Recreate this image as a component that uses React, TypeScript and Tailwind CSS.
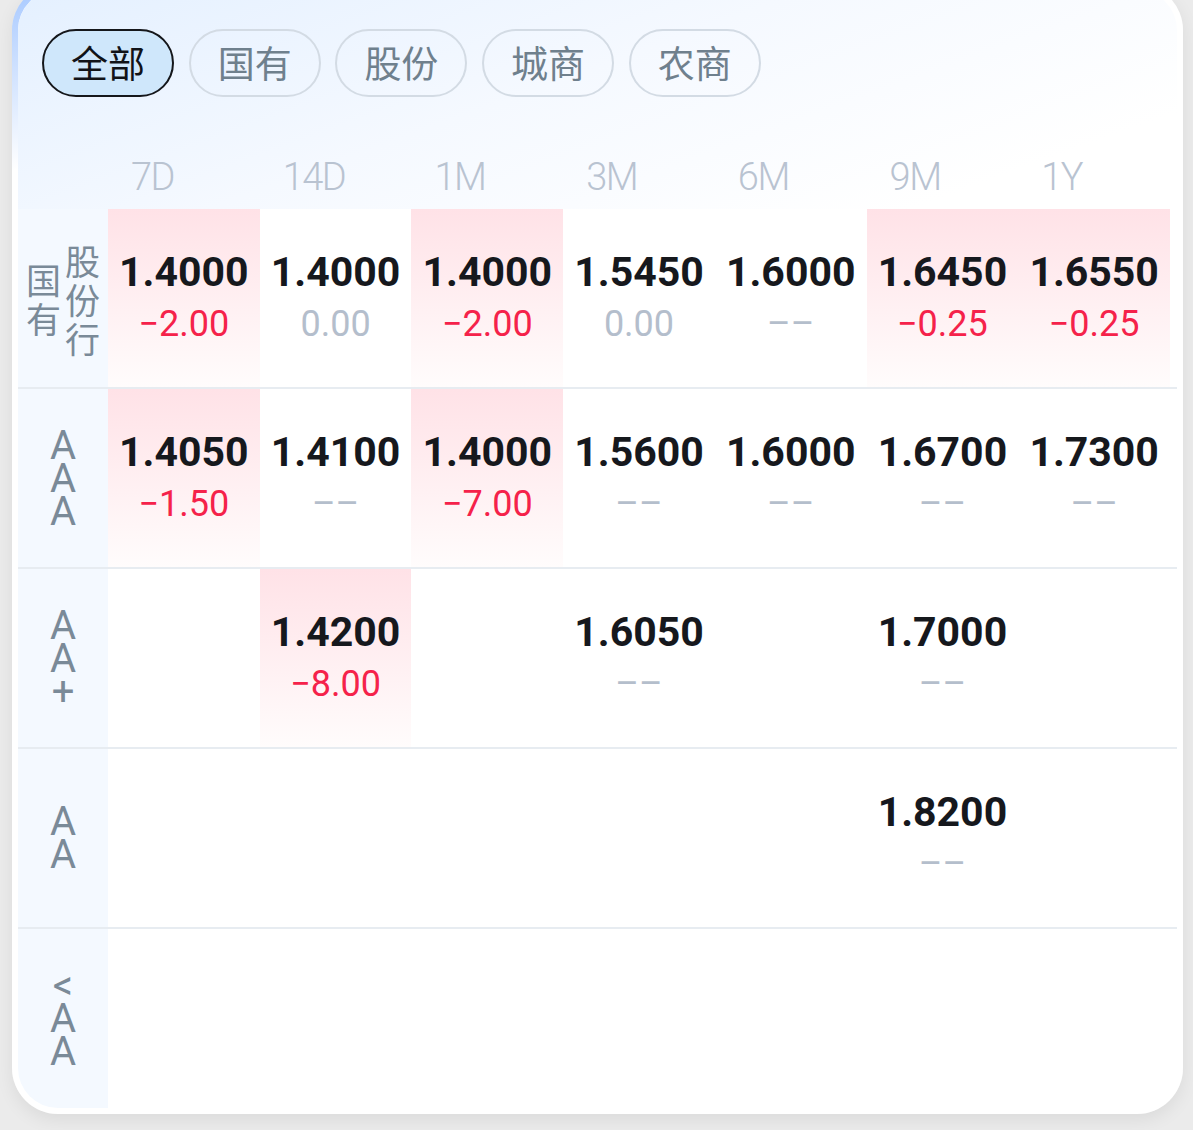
import React from "react";

type Cell = { v: string; c: string; hl?: boolean } | null;

const tabs = ["全部", "国有", "股份", "城商", "农商"];
const terms = ["7D", "14D", "1M", "3M", "6M", "9M", "1Y"];

const rows: { label: string[][]; cells: Cell[] }[] = [
  {
    label: [["国", "有"], ["股", "份", "行"]],
    cells: [
      { v: "1.4000", c: "−2.00", hl: true },
      { v: "1.4000", c: "0.00" },
      { v: "1.4000", c: "−2.00", hl: true },
      { v: "1.5450", c: "0.00" },
      { v: "1.6000", c: "––" },
      { v: "1.6450", c: "−0.25", hl: true },
      { v: "1.6550", c: "−0.25", hl: true },
    ],
  },
  {
    label: [["A", "A", "A"]],
    cells: [
      { v: "1.4050", c: "−1.50", hl: true },
      { v: "1.4100", c: "––" },
      { v: "1.4000", c: "−7.00", hl: true },
      { v: "1.5600", c: "––" },
      { v: "1.6000", c: "––" },
      { v: "1.6700", c: "––" },
      { v: "1.7300", c: "––" },
    ],
  },
  {
    label: [["A", "A", "+"]],
    cells: [null, { v: "1.4200", c: "−8.00", hl: true }, null, { v: "1.6050", c: "––" }, null, { v: "1.7000", c: "––" }, null],
  },
  {
    label: [["A", "A"]],
    cells: [null, null, null, null, null, { v: "1.8200", c: "––" }, null],
  },
  {
    label: [["<", "A", "A"]],
    cells: [null, null, null, null, null, null, null],
  },
];

const num = { fontFamily: "Roboto, 'Liberation Sans', sans-serif" };
const cjk = { fontFamily: "'Noto Sans CJK SC', 'Noto Sans', sans-serif" };

function RowLabel({ cols }: { cols: string[][] }) {
  const isCjk = cols.length > 1;
  return (
    <div className="flex items-center justify-center gap-[4px] bg-[#f4f9ff] text-[#7a8a98]">
      {cols.map((col, i) => (
        <div key={i} className="flex flex-col items-center">
          {col.map((ch, j) =>
            isCjk ? (
              <span key={j} className="text-[35px] leading-[39px]" style={cjk}>
                {ch}
              </span>
            ) : (
              <span key={j} className="text-[40px] leading-[33px]" style={num}>
                {ch}
              </span>
            )
          )}
        </div>
      ))}
    </div>
  );
}

function ValueCell({ cell }: { cell: Cell }) {
  if (!cell) return <div />;
  const color = cell.c.startsWith("−") ? "text-[#f5224a]" : "text-[#b4becc]";
  return (
    <div
      className={
        "flex flex-col items-center justify-center " +
        (cell.hl ? "bg-gradient-to-b from-[#ffe2e7] to-[#fffcfc]" : "")
      }
      style={num}
    >
      <span className="text-[41px] font-bold leading-[48px] text-[#16181d]">{cell.v}</span>
      <span className={"mt-[4px] text-[36px] leading-[48px] " + color}>{cell.c}</span>
    </div>
  );
}

export default function App() {
  return (
    <div className="min-h-screen overflow-hidden bg-[#ebebeb] pl-[12px] pr-[10px]">
      <div className="-mt-[16px] rounded-[46px] bg-[linear-gradient(170deg,#a6c8ff_0%,#ffffff_14%)] p-[6px] shadow-[0_6px_18px_rgba(0,0,0,0.07)]">
        <div className="overflow-hidden rounded-[40px] bg-white">
          {/* header: tabs + terms */}
          <div className="bg-[linear-gradient(160deg,#e4f0ff_0%,#f5f9ff_45%,#ffffff_85%)] pt-[39px]">
            <div className="flex gap-[14.7px] pl-[24px]">
              {tabs.map((t, i) => (
                <div
                  key={t}
                  className={
                    "flex h-[68px] w-[132px] items-center justify-center rounded-full border-[2.5px] text-[37px] " +
                    (i === 0
                      ? "border-[#15171b] bg-[#cfe7fb] text-[#111318]"
                      : "border-[#d3dbe4] text-[#6f808d]")
                  }
                  style={cjk}
                >
                  {t}
                </div>
              ))}
            </div>
            <div className="mt-[48px] grid h-[64px] grid-cols-[90px_repeat(7,minmax(0,1fr))] items-center pr-[7px]">
              <div />
              {terms.map((t) => (
                <div key={t} className="pl-[23px] text-[38px] font-light tracking-[-1.5px] text-[#b9c3d1]" style={num}>
                  {t}
                </div>
              ))}
            </div>
          </div>

          {/* rows */}
          {rows.map((r, i) => (
            <div
              key={i}
              className={
                "grid grid-cols-[90px_repeat(7,minmax(0,1fr))] pr-[7px] " +
                (i < rows.length - 1 ? "h-[180px] border-b-2 border-[#e7ecf1]" : "h-[179px]")
              }
            >
              <RowLabel cols={r.label} />
              {r.cells.map((c, j) => (
                <ValueCell key={j} cell={c} />
              ))}
            </div>
          ))}
        </div>
      </div>
    </div>
  );
}
